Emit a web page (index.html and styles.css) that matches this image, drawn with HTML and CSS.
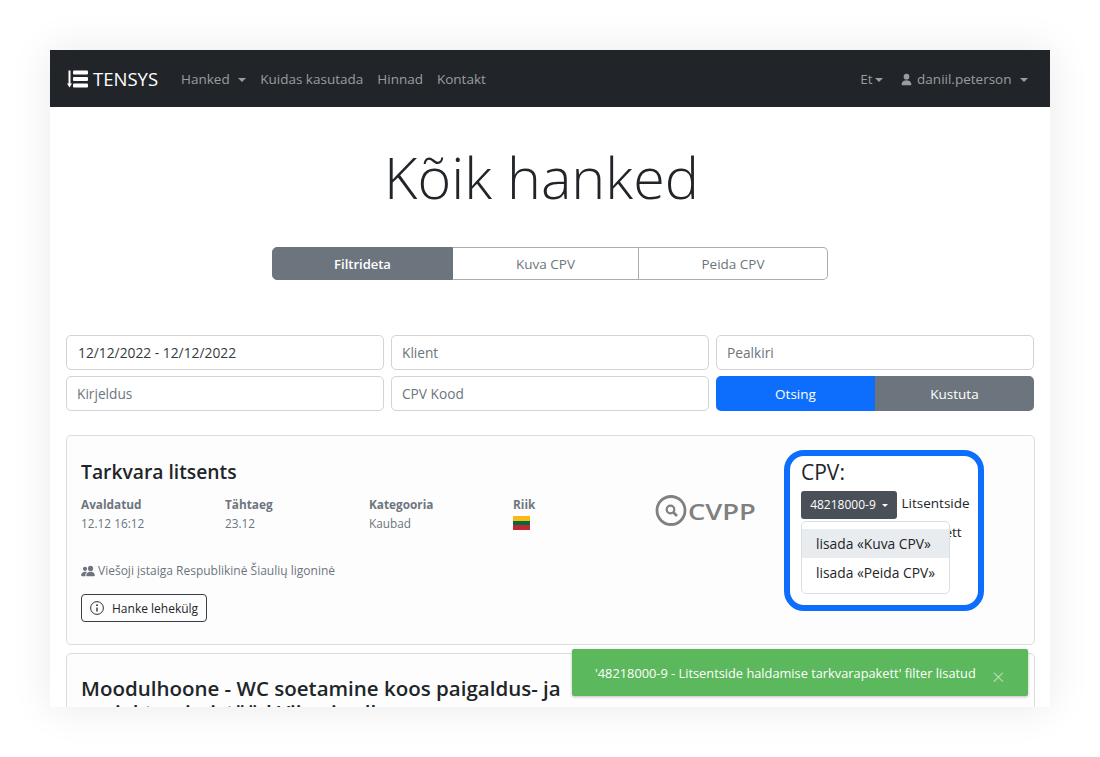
FILE: index.html
```html
<!DOCTYPE html>
<html lang="et">
<head>
    <meta charset="UTF-8">
    <title>Kõik hanked</title>
    <link rel="stylesheet" href="styles.css">
</head>
<body>
<div class="window">
    <header class="navbar">
        <a class="brand" href="#">
            <svg class="brand-icon" width="22" height="18" viewBox="0 0 22 18">
                <path d="M2.5 0.5V14" stroke="#fff" stroke-width="2" fill="none"/>
                <path d="M0 13.5H5L2.5 17.5Z" fill="#fff"/>
                <rect x="6" y="0.5" width="15" height="4" rx="1" fill="#fff"/>
                <rect x="6" y="7" width="15" height="4" rx="1" fill="#fff"/>
                <rect x="6" y="13.5" width="15" height="4" rx="1" fill="#fff"/>
            </svg>
            TENSYS
        </a>
        <nav class="nav-left">
            <a href="#">Hanked <span class="caret caret-wide"></span></a>
            <a href="#">Kuidas kasutada</a>
            <a href="#">Hinnad</a>
            <a href="#">Kontakt</a>
        </nav>
        <nav class="nav-right">
            <a href="#">Et<span class="caret caret-near"></span></a>
            <a href="#">
                <svg class="user-icon" width="13" height="13" viewBox="0 0 16 16"><path d="M3 15s-1 0-1-1 1-5 6-5 6 4 6 5-1 1-1 1H3zm5-7a3.5 3.5 0 1 0 0-7 3.5 3.5 0 0 0 0 7z" fill="#9a9da0"/></svg>
                daniil.peterson <span class="caret caret-wide"></span>
            </a>
        </nav>
    </header>

    <h1 class="page-title">Kõik hanked</h1>

    <div class="btn-group">
        <button class="tab tab-active">Filtrideta</button>
        <button class="tab tab-show">Kuva CPV</button>
        <button class="tab tab-hide">Peida CPV</button>
    </div>

    <section class="filters">
        <input class="field field-filled" type="text" value="12/12/2022 - 12/12/2022">
        <input class="field" type="text" placeholder="Klient">
        <input class="field" type="text" placeholder="Pealkiri">
        <input class="field" type="text" placeholder="Kirjeldus">
        <input class="field" type="text" placeholder="CPV Kood">
        <div class="filter-actions">
            <button class="action action-search">Otsing</button>
            <button class="action action-clear">Kustuta</button>
        </div>
    </section>

    <article class="card">
        <div class="card-main">
            <h2 class="card-title">Tarkvara litsents</h2>
            <div class="meta">
                <div>
                    <div class="meta-label">Avaldatud</div>
                    <div>12.12 16:12</div>
                </div>
                <div>
                    <div class="meta-label">Tähtaeg</div>
                    <div>23.12</div>
                </div>
                <div>
                    <div class="meta-label">Kategooria</div>
                    <div>Kaubad</div>
                </div>
                <div>
                    <div class="meta-label">Riik</div>
                    <div class="flag"><span class="flag-y"></span><span class="flag-g"></span><span class="flag-r"></span></div>
                </div>
            </div>
            <p class="buyer">
                <svg width="14" height="12" viewBox="0 0 16 14"><path d="M7 13s-1 0-1-1 1-4 5-4 5 3 5 4-1 1-1 1H7zm4-6a3 3 0 1 0 0-6 3 3 0 0 0 0 6zM5.2 13a2.2 2.2 0 0 1-.2-1c0-1.400.7-2.800 2-3.800A6.500 6.500 0 0 0 5 8c-4 0-5 3-5 4s1 1 1 1h4.200zM4.500 7a2.500 2.500 0 1 0 0-5 2.500 2.500 0 0 0 0 5z" fill="#6c757d"/></svg>
                Viešoji įstaiga Respublikinė Šiaulių ligoninė
            </p>
            <button class="btn-outline">
                <svg width="14" height="14" viewBox="0 0 16 16" fill="none"><circle cx="8" cy="8" r="7.300" stroke="#212529" stroke-width="1.100"/><circle cx="8" cy="4.800" r="1" fill="#212529"/><path d="M8 7.300V12" stroke="#212529" stroke-width="1.500"/></svg>
                Hanke lehekülg
            </button>
        </div>
        <div class="source-logo">
            <svg width="33" height="33" viewBox="0 0 33 33" fill="none">
                <circle cx="16" cy="16.500" r="14" stroke="#808080" stroke-width="2.800"/>
                <circle cx="15.500" cy="15.500" r="3.800" stroke="#808080" stroke-width="2.200"/>
                <path d="M18.500 18.500L22 22" stroke="#808080" stroke-width="2.600"/>
            </svg>
            <span>CVPP</span>
        </div>
        <div class="cpv">
            <div class="cpv-title">CPV:</div>
            <div class="cpv-line">
                <button class="btn-code">48218000-9 <span class="caret caret-small"></span></button>
                Litsentside haldamise tarkvarapakett
            </div>
            <ul class="menu">
                <li class="menu-hover">lisada «Kuva CPV»</li>
                <li>lisada «Peida CPV»</li>
            </ul>
        </div>
    </article>

    <article class="card card-next">
        <h2 class="card-title">Moodulhoone - WC soetamine koos paigaldus- ja<br>projekteerimistööd Viimsi vallas</h2>
    </article>

    <div class="toast">
        <span>'48218000-9 - Litsentside haldamise tarkvarapakett' filter lisatud</span>
        <span class="toast-close">×</span>
    </div>
</div>
</body>
</html>
```

FILE: styles.css
```css
* {
    margin: 0;
    padding: 0;
    box-sizing: border-box;
    font-family: "Open Sans", "Noto Sans", sans-serif;
}

body {
    background-color: #fff;
    padding: 50px 50px 0;
    height: 757px;
    overflow: hidden;
}

.window {
    position: relative;
    height: 657px;
    background-color: #fff;
    box-shadow: 0 0 40px rgba(0, 0, 0, 0.09);
    overflow: hidden;
    color: #212529;
    font-size: 13.500px;
}

/* Navbar */
.navbar {
    display: flex;
    align-items: center;
    height: 57px;
    padding: 0 22px 0 17px;
    background-color: #212529;
}

.navbar a {
    color: #9a9da0;
    text-decoration: none;
}

.brand {
    display: flex;
    align-items: center;
    gap: 4px;
    margin-right: 23px;
    font-size: 18.500px;
}

.navbar .brand {
    color: #fff;
}

.nav-left {
    display: flex;
    gap: 14px;
}

.nav-right {
    display: flex;
    gap: 17px;
    margin-left: auto;
}

.user-icon {
    margin-right: 1px;
    vertical-align: -2px;
}

.caret {
    display: inline-block;
    width: 0;
    height: 0;
    margin-left: 2px;
    vertical-align: 2px;
    border-top: 4.500px solid;
    border-left: 4.500px solid transparent;
    border-right: 4.500px solid transparent;
}

.caret-wide {
    margin-left: 5px;
}

.caret-near {
    margin-left: 2px;
}

.caret-small {
    margin-left: 3px;
    border-top-width: 3.500px;
    border-left-width: 3.500px;
    border-right-width: 3.500px;
}

/* Title and tabs */
.page-title {
    margin-top: 31px;
    padding-right: 17px;
    text-align: center;
    font-size: 57.500px;
    line-height: 78px;
    font-weight: 300;
}

.btn-group {
    display: flex;
    width: 556px;
    height: 33px;
    margin: 31px auto 0;
}

.tab {
    border: 1px solid #a9adb1;
    border-left: 0;
    background-color: #fff;
    color: #6c757d;
    font-size: 13.500px;
}

.tab-active {
    width: 181px;
    border: 1px solid #6c757d;
    border-radius: 5px 0 0 5px;
    background-color: #6c757d;
    color: #fff;
    font-size: 13px;
    font-weight: 600;
}

.tab-show {
    width: 186px;
}

.tab-hide {
    width: 189px;
    border-radius: 0 5px 5px 0;
}

/* Filters */
.filters {
    display: grid;
    grid-template-columns: repeat(3, 318px);
    gap: 6px 7px;
    margin: 55px 16px 0;
}

.field {
    height: 35px;
    padding: 0 10px;
    border: 1px solid #ced4da;
    border-radius: 5px;
    font-size: 13.700px;
    color: #495057;
    background-color: #fff;
}

.field-filled {
    padding-left: 11px;
    font-size: 13.800px;
    color: #343a40;
}

.field::placeholder {
    color: #6c757d;
}

.filter-actions {
    display: flex;
}

.action {
    flex: 1;
    border: 0;
    color: #fff;
    font-size: 13.500px;
}

.action-search {
    background-color: #0d6efd;
    border-radius: 5px 0 0 5px;
}

.action-clear {
    background-color: #6c757d;
    border-radius: 0 5px 5px 0;
}

/* Cards */
.card {
    position: relative;
    display: flex;
    height: 210px;
    margin: 24px 15px 0 16px;
    padding: 24px 14px;
    background-color: #fdfdfd;
    border: 1px solid #dcdcdc;
    border-radius: 5px;
}

.card-next {
    height: 120px;
    margin-top: 8px;
    padding-top: 22px;
}

.card-title {
    font-size: 19.300px;
    line-height: 24px;
    font-weight: 600;
    color: #212529;
}

.card-next .card-title {
    font-size: 20.500px;
}

.card-main {
    width: 576px;
}

.meta {
    display: grid;
    grid-template-columns: repeat(4, 144px);
    margin-top: 11px;
    font-size: 11.800px;
    line-height: 18px;
    color: #6c757d;
}

.meta-label {
    line-height: 19px;
    font-weight: 700;
}

.flag {
    width: 17px;
    margin-top: 2px;
}

.flag span {
    display: block;
    height: 4.500px;
}

.flag .flag-y {
    background-color: #fdb913;
}

.flag .flag-g {
    background-color: #006a44;
}

.flag .flag-r {
    background-color: #c1272d;
}

.buyer {
    display: flex;
    align-items: center;
    gap: 3px;
    margin-top: 30px;
    font-size: 12px;
    line-height: 18px;
    color: #6c757d;
}

.btn-outline {
    display: flex;
    align-items: center;
    gap: 8px;
    height: 28px;
    margin-top: 14px;
    padding: 0 8px;
    background-color: transparent;
    border: 1px solid #3a3f44;
    border-radius: 4px;
    color: #212529;
    font-size: 12px;
}

.source-logo {
    position: absolute;
    left: 588px;
    top: 58px;
    display: flex;
    align-items: center;
}

.source-logo span {
    display: inline-block;
    transform: scaleX(1.24);
    transform-origin: left center;
    color: #808080;
    font-size: 22px;
    font-weight: 600;
}

/* CPV box */
.cpv {
    position: absolute;
    left: 717px;
    top: 14px;
    width: 200px;
    height: 161px;
    padding: 2px 11px;
    background-color: #fff;
    border: 6px solid #0d6efd;
    border-radius: 20px;
}

.cpv-title {
    font-size: 21px;
    line-height: 28px;
    color: #212529;
}

.cpv-line {
    width: 180px;
    margin-top: 4px;
    font-size: 13.500px;
    line-height: 26px;
}

.btn-code {
    height: 28px;
    width: 96px;
    margin-right: 1px;
    vertical-align: -1px;
    background-color: #495057;
    border: 0;
    border-radius: 3px;
    color: #fff;
    font-size: 12px;
}

.menu {
    position: absolute;
    left: 11px;
    top: 65px;
    width: 149px;
    height: 73px;
    padding-top: 7px;
    list-style: none;
    background-color: #fff;
    border: 1px solid #dcdfe2;
    border-radius: 5px;
    font-size: 13.800px;
}

.menu li {
    height: 29px;
    padding-left: 14px;
    line-height: 29px;
    color: #212529;
}

.menu .menu-hover {
    background-color: #e9ecef;
}

/* Toast */
.toast {
    position: absolute;
    left: 522px;
    top: 599px;
    display: flex;
    align-items: center;
    width: 456px;
    height: 47px;
    padding-left: 23px;
    background-color: #5cb85c;
    border-radius: 2px;
    box-shadow: 0 1px 3px rgba(0, 0, 0, 0.25);
    color: #fff;
    font-size: 12.800px;
}

.toast-close {
    position: absolute;
    left: 420px;
    top: 12px;
    font-size: 22px;
    font-weight: 300;
    opacity: 0.6;
}
```
